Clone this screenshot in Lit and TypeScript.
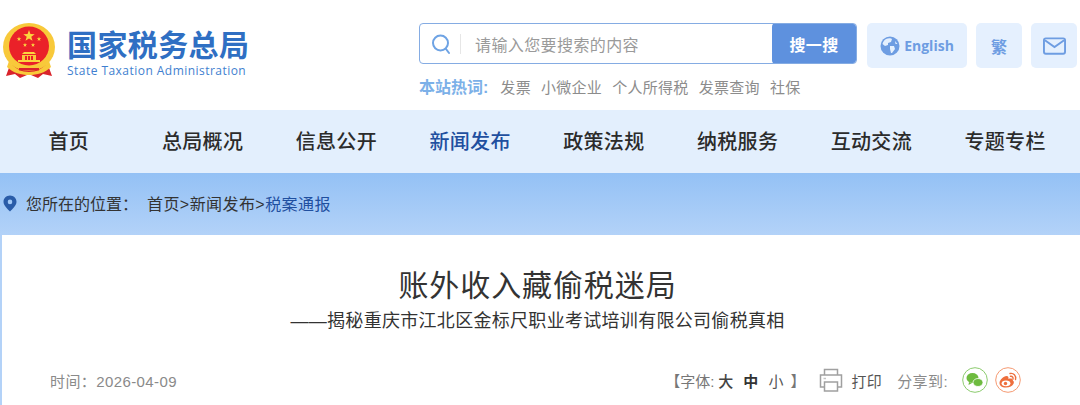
import { LitElement, css, html, svg } from "lit";
import { customElement } from "lit/decorators.js";

const NAV = ["首页", "总局概况", "信息公开", "新闻发布", "政策法规", "纳税服务", "互动交流", "专题专栏"];
const HOT = ["发票", "小微企业", "个人所得税", "发票查询", "社保"];

const star = (cx: number, cy: number, r: number) => {
  const pts = [];
  for (let i = 0; i < 10; i++) {
    const a = -Math.PI / 2 + (i * Math.PI) / 5;
    const d = i % 2 ? r * 0.4 : r;
    pts.push(`${(cx + d * Math.cos(a)).toFixed(2)},${(cy + d * Math.sin(a)).toFixed(2)}`);
  }
  return svg`<polygon points=${pts.join(" ")} fill="#fbd63f" />`;
};

const emblem = html`<svg class="emblem" width="52" height="56" viewBox="0 0 52 56">
  <path d="M7 42 L3 53 L12 51 L17 55 L24 52 L28 52 L35 55 L40 51 L49 53 L45 42 Z" fill="#d9232b" />
  <ellipse cx="26" cy="24" rx="26" ry="24" fill="#f8c93a" />
  <ellipse cx="26" cy="23" rx="20" ry="19.5" fill="#ea2129" />
  ${star(26, 13, 6)} ${star(16, 16, 2.4)} ${star(36, 16, 2.4)} ${star(22, 22, 2.2)} ${star(30, 22, 2.2)}
  <path d="M21 29 H31 L33 31 H19 Z" fill="#fbd63f" />
  <path d="M19 32 H33 V37 H19 Z" fill="#f8c93a" />
  <path d="M22 33 H24 V37 H22 Z M25 33 H27 V37 H25 Z M28 33 H30 V37 H28 Z" fill="#ea2129" />
  <path d="M15 37 H37 V39 H15 Z" fill="#fbd63f" />
  <path d="M6 38 C12 46 19 49 26 49 C33 49 40 46 46 38 L48 44 C42 50 34 52 26 52 C18 52 10 50 4 44 Z" fill="#f8c93a" />
  <path d="M16 45 H36 V47.5 H16 Z" fill="#d9232b" />
</svg>`;

@customElement("app-root")
export class AppRoot extends LitElement {
  static styles = css`
    :host {
      display: block;
      width: 1080px;
      height: 405px;
      overflow: hidden;
      background: #fff;
      font-family: "Liberation Sans", "Noto Sans CJK SC", sans-serif;
      color: #333;
    }
    .top {
      height: 110px;
      box-sizing: border-box;
      display: flex;
      padding: 23px 3px 0 3px;
    }
    .logo {
      display: flex;
      gap: 12px;
      width: 416px;
      height: 58px;
      flex: none;
    }
    .emblem {
      flex: none;
    }
    .logo-text {
      display: flex;
      flex-direction: column;
      color: #2f6fc3;
    }
    .logo-cn {
      font-size: 30px;
      line-height: 40px;
      font-weight: 700;
      letter-spacing: 0.4px;
      margin-top: 3px;
    }
    .logo-en {
      font-family: "Open Sans", "Noto Sans", sans-serif;
      font-size: 12px;
      line-height: 16px;
      letter-spacing: 0.46px;
      color: #3f7fd0;
      margin-top: -3px;
    }
    .search-col {
      width: 438px;
      flex: none;
    }
    .search {
      height: 41px;
      box-sizing: border-box;
      border: 1px solid #85ace3;
      border-radius: 4px;
      display: flex;
      align-items: center;
      overflow: hidden;
    }
    .search-icon {
      margin-left: 11px;
      flex: none;
    }
    .search-sep {
      width: 1px;
      height: 20px;
      background: #e6e6e6;
      margin: 0 14px 0 9px;
    }
    .placeholder {
      flex: 1;
      font-size: 16px;
      letter-spacing: 0.4px;
      color: #9a9a9a;
    }
    .search-btn {
      width: 84px;
      height: 41px;
      background: #5e91de;
      color: #fff;
      border-radius: 4px;
      font-size: 16px;
      font-weight: 700;
      letter-spacing: 0.3px;
      display: flex;
      align-items: center;
      justify-content: center;
    }
    .hot {
      display: flex;
      align-items: center;
      margin-top: 13px;
      font-size: 15px;
      letter-spacing: 0.3px;
      line-height: 22px;
      color: #8c8c8c;
      gap: 10px;
    }
    .hot-label {
      color: #7cb0e8;
      font-size: 16px;
      letter-spacing: 0;
      font-weight: 700;
      margin-right: 2px;
    }
    .tools {
      display: flex;
      gap: 9px;
      margin-left: 10px;
    }
    .tool {
      height: 45px;
      border-radius: 5px;
      background: #e5f0fe;
      color: #6e9de2;
      display: flex;
      align-items: center;
      justify-content: center;
      font-size: 16px;
      font-weight: 700;
    }
    .tool-en {
      width: 100px;
      gap: 4px;
      font-family: "Open Sans", "Noto Sans", sans-serif;
      font-size: 14px;
    }
    .tool-sq {
      width: 46px;
    }
    .nav {
      height: 63px;
      box-sizing: border-box;
      padding-bottom: 2px;
      background: #e3effd;
      display: grid;
      grid-template-columns: repeat(8, 133.75px);
      padding-left: 2px;
      align-items: center;
      text-align: center;
      font-size: 20px;
      font-weight: 500;
      letter-spacing: 0.3px;
      color: #2b2b2b;
    }
    .nav .on {
      color: #1f4f9f;
    }
    .band {
      height: 232px;
      padding-left: 2px;
      background: linear-gradient(#94c1f5, #b3d2f8 62px);
      display: flex;
      flex-direction: column;
    }
    .crumb {
      height: 62px;
      box-sizing: border-box;
      padding-bottom: 2px;
      display: flex;
      align-items: center;
      margin-left: -2px;
      font-size: 16px;
      color: #333;
    }
    .pin {
      margin: 0 9px 0 3px;
      flex: none;
    }
    .crumb-label {
      width: 121px;
    }
    .crumb-path {
      letter-spacing: 0.43px;
    }
    .crumb .cur {
      color: #1f4f9f;
    }
    .card {
      flex: 1;
      background: #fff;
      display: flex;
      flex-direction: column;
      align-items: center;
      padding-top: 31px;
    }
    .title,
    .sub {
      position: relative;
      left: -3.5px;
    }
    .title {
      font-size: 30px;
      line-height: 40px;
      letter-spacing: 0.9px;
      color: #333;
    }
    .sub {
      font-size: 18px;
      line-height: 26px;
      letter-spacing: 0.3px;
      color: #333;
      margin-top: 2px;
    }
    .meta {
      align-self: stretch;
      display: flex;
      align-items: center;
      justify-content: space-between;
      padding: 0 59px 0 48px;
      margin-top: 33px;
      font-size: 15px;
      color: #8a8a8a;
    }
    .date {
      letter-spacing: 0.4px;
    }
    .meta-right {
      display: flex;
      align-items: center;
    }
    .size {
      display: flex;
      align-items: center;
      margin-right: 14px;
      color: #777;
    }
    .size b {
      color: #444;
      font-weight: 500;
      margin-left: 10px;
    }
    .size .big {
      margin-left: 4px;
    }
    .size .mid {
      font-weight: 700;
      color: #333;
    }
    .size .small {
      font-weight: 400;
      color: #555;
    }
    .size .close {
      margin-left: 7px;
    }
    .print {
      color: #555;
      letter-spacing: 0.4px;
      margin: 0 15px 0 8px;
    }
    .share-label {
      letter-spacing: 0.4px;
      margin-right: 7px;
    }
    .share {
      display: flex;
      width: 26px;
      height: 26px;
      flex: none;
      margin-left: 7px;
    }
  `;

  render() {
    return html`
      <div class="top">
        <div class="logo">
          ${emblem}
          <div class="logo-text">
            <span class="logo-cn">国家税务总局</span>
            <span class="logo-en">State Taxation Administration</span>
          </div>
        </div>
        <div class="search-col">
          <div class="search">
            <svg class="search-icon" width="20" height="22" viewBox="0 0 20 22" fill="none" stroke="#6ea3e4" stroke-width="2">
              <circle cx="9.5" cy="10" r="7.5" />
              <path d="M15 16 L18 20" stroke-linecap="round" />
            </svg>
            <span class="search-sep"></span>
            <span class="placeholder">请输入您要搜索的内容</span>
            <span class="search-btn">搜一搜</span>
          </div>
          <div class="hot">
            <span class="hot-label">本站热词:</span>
            ${HOT.map((h) => html`<span>${h}</span>`)}
          </div>
        </div>
        <div class="tools">
          <div class="tool tool-en">
            <svg width="20" height="20" viewBox="0 0 20 20">
              <circle cx="10" cy="10" r="9.5" fill="#6e9de2" />
              <path d="M6 3 C8 2 11 2 12 3 L11 6 L8 7 L8 9 L5 10 L2.5 8 C3 6 4 4 6 3 Z M10 10 L14 10 L15 13 L12 17 L11 17 L10 13 Z M15 5 L17.5 8 L15.5 8 Z" fill="#e5f0fe" />
            </svg>
            <span>English</span>
          </div>
          <div class="tool tool-sq">繁</div>
          <div class="tool tool-sq">
            <svg width="23" height="18" viewBox="0 0 24 18" fill="none" stroke="#6e9de2" stroke-width="2">
              <rect x="1" y="1" width="22" height="16" rx="2" />
              <path d="M2 3 L12 10 L22 3" />
            </svg>
          </div>
        </div>
      </div>
      <div class="nav">
        ${NAV.map((n) => html`<span class=${n === "新闻发布" ? "on" : ""}>${n}</span>`)}
      </div>
      <div class="band">
        <div class="crumb">
          <svg class="pin" width="14" height="17" viewBox="0 0 14 17">
            <path fill-rule="evenodd" fill="#2a5ca8" d="M7 0.5 C10.6 0.5 13.5 3.3 13.5 6.8 C13.5 10.5 9.5 14 7 16.5 C4.5 14 0.5 10.5 0.5 6.8 C0.5 3.3 3.4 0.5 7 0.5 Z M7 4.6 A2.3 2.3 0 1 0 7 9.2 A2.3 2.3 0 1 0 7 4.6 Z" />
          </svg>
          <span class="crumb-label">您所在的位置：</span>
          <span class="crumb-path">首页&gt;新闻发布&gt;<span class="cur">税案通报</span></span>
        </div>
        <div class="card">
          <div class="title">账外收入藏偷税迷局</div>
          <div class="sub">——揭秘重庆市江北区金标尺职业考试培训有限公司偷税真相</div>
          <div class="meta">
            <span class="date">时间：2026-04-09</span>
            <div class="meta-right">
              <span class="size">【字体:<b class="big">大</b><b class="mid">中</b><b class="small">小</b><span class="close">】</span></span>
              <svg width="24" height="24" viewBox="0 0 24 24" fill="none" stroke="#a0a0a0" stroke-width="1.5">
                <path d="M5.5 7 V1.5 H18.5 V7 M5.5 19 H1.5 V7 H22.5 V19 H18.5" />
                <path d="M5.5 14 H18.5 V23 H5.5 Z" />
                <path d="M4.5 10.5 H7" stroke="#c4c4c4" />
              </svg>
              <span class="print">打印</span>
              <span class="share-label">分享到:</span>
              <svg class="share" viewBox="0 0 26 26">
                <circle cx="13" cy="13" r="12.3" fill="#fff" stroke="#8ccb6e" />
                <ellipse cx="10.5" cy="11" rx="6" ry="5" fill="#6ebb3f" />
                <path d="M7 15 L6.5 18 L10 16 Z" fill="#6ebb3f" />
                <ellipse cx="16" cy="15.5" rx="5" ry="4" fill="#6ebb3f" stroke="#fff" stroke-width=".8" />
              </svg>
              <svg class="share" viewBox="0 0 26 26">
                <circle cx="13" cy="13" r="12.3" fill="#fff" stroke="#f59a72" />
                <path d="M11 20.5 C6.5 20.5 4.5 18.5 4.5 16 C4.5 13 8.5 9 11.5 9 C13.5 9 13.8 10.5 13.4 12 C15.5 11.2 18 11.5 18 13.8 C20 14.5 19 20.5 11 20.5 Z" fill="#ee6f3d" />
                <ellipse cx="11" cy="16.3" rx="4.4" ry="2.9" fill="#fff" />
                <circle cx="10.5" cy="16.5" r="1.7" fill="#ee6f3d" />
                <path d="M15 6.5 C18.5 5.8 21.5 8.5 20.5 12.5 M15.5 9.3 C17.2 9 18.5 10.3 18 12" fill="none" stroke="#ee6f3d" stroke-width="1.4" stroke-linecap="round" />
              </svg>
            </div>
          </div>
        </div>
      </div>
    `;
  }
}
